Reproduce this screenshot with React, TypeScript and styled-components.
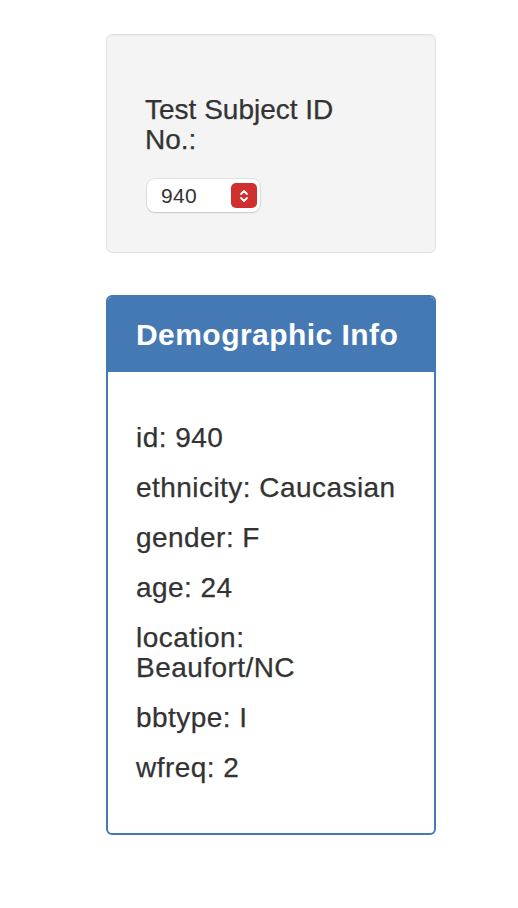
import React from "react";
import styled, { createGlobalStyle } from "styled-components";

const Global = createGlobalStyle`
  html, body { margin: 0; padding: 0; background: #ffffff; }
  body { font-family: "Liberation Sans", Arial, sans-serif; color: #333333; }
  * { box-sizing: border-box; }
`;

const Page = styled.div`
  width: 518px;
  padding: 34px 0 0 106px;
  display: flex;
  flex-direction: column;
  gap: 42px;
`;

const Well = styled.div`
  width: 330px;
  height: 219px;
  background: #f4f4f4;
  border: 1px solid #e2e2e2;
  border-radius: 6px;
  box-shadow: inset 0 1px 1px rgba(0, 0, 0, 0.03);
  padding: 60px 38px 0 38px;
  display: flex;
  flex-direction: column;
  align-items: flex-start;
  gap: 24px;
`;

const Label = styled.label`
  display: block;
  font-size: 28px;
  line-height: 30px;
  color: #333333;
  max-width: 220px;
  -webkit-text-stroke: 0.25px #333333;
`;

const NumberBox = styled.div`
  width: 113px;
  height: 33px;
  margin-left: 2px;
  background: #ffffff;
  border-radius: 8px;
  box-shadow: 0 0 0 1px rgba(0, 0, 0, 0.07), 0 1px 2px rgba(0, 0, 0, 0.12);
  display: flex;
  align-items: center;
  justify-content: space-between;
  padding: 0 3px 0 14px;
`;

const NumberText = styled.span`
  font-size: 21px;
  line-height: 1;
  color: #333333;
  letter-spacing: 0.3px;
`;

const Stepper = styled.div`
  width: 26px;
  height: 25px;
  border-radius: 5px;
  background: #cf2f2d;
  display: flex;
  align-items: center;
  justify-content: center;
`;

const Panel = styled.div`
  width: 330px;
  border: 2px solid #4579b3;
  border-radius: 6px;
  overflow: hidden;
  background: #ffffff;
`;

const PanelHeading = styled.div`
  background: #4579b3;
  color: #ffffff;
  font-weight: 700;
  font-size: 30px;
  line-height: 34px;
  letter-spacing: 0.45px;
  padding: 21px 20px 20px 28px;
  white-space: nowrap;
`;

const PanelBody = styled.div`
  padding: 51px 30px 50px 28px;
  display: flex;
  flex-direction: column;
  gap: 20px;
`;

const InfoRow = styled.div`
  font-size: 28px;
  line-height: 30px;
  letter-spacing: 0.45px;
  color: #333333;
  -webkit-text-stroke: 0.25px #333333;
`;

const StepIcon = () => (
  <svg width="12" height="16" viewBox="0 0 12 16" fill="none">
    <path d="M3 6 L6 3 L9 6" stroke="#ffffff" strokeWidth="1.8" strokeLinecap="round" strokeLinejoin="round" />
    <path d="M3 10 L6 13 L9 10" stroke="#ffffff" strokeWidth="1.8" strokeLinecap="round" strokeLinejoin="round" />
  </svg>
);

const info: [string, string][] = [
  ["id", "940"],
  ["ethnicity", "Caucasian"],
  ["gender", "F"],
  ["age", "24"],
  ["location", "Beaufort/NC"],
  ["bbtype", "I"],
  ["wfreq", "2"],
];

export default function App() {
  return (
    <>
      <Global />
      <Page>
        <Well>
          <Label>Test Subject ID No.:</Label>
          <NumberBox>
            <NumberText>940</NumberText>
            <Stepper>
              <StepIcon />
            </Stepper>
          </NumberBox>
        </Well>
        <Panel>
          <PanelHeading>Demographic Info</PanelHeading>
          <PanelBody>
            {info.map(([k, v]) => (
              <InfoRow key={k}>
                {k}: {v}
              </InfoRow>
            ))}
          </PanelBody>
        </Panel>
      </Page>
    </>
  );
}
